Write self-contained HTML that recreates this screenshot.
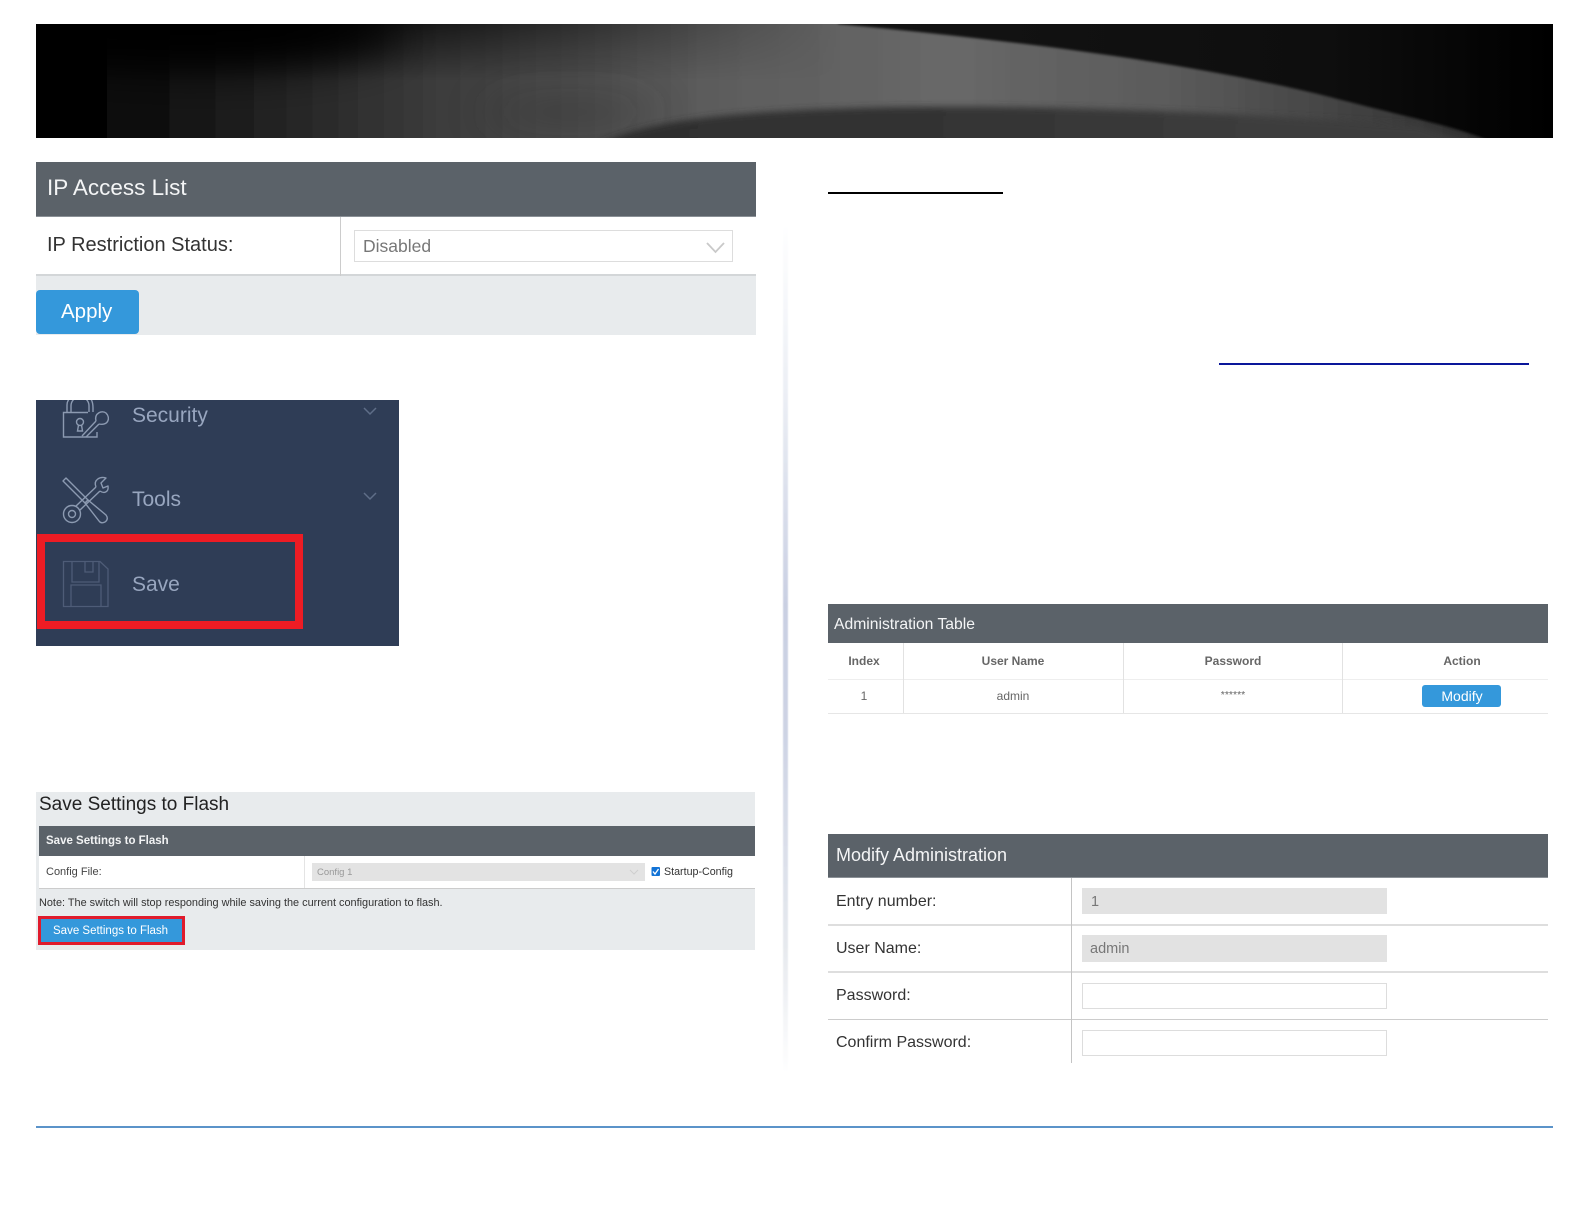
<!DOCTYPE html>
<html><head><meta charset="utf-8"><title>Switch user guide page</title>
<style>
html,body{margin:0;padding:0;background:#fff}
body{width:1584px;height:1224px;position:relative;overflow:hidden;font-family:"Liberation Sans",sans-serif}
.b{position:absolute;box-sizing:border-box}
.t{position:absolute;white-space:nowrap;height:20px;line-height:20px;filter:blur(.25px)}
.c{transform:translateX(-50%)}
svg{position:absolute;left:0;top:0}
</style></head><body>
<svg width="1584" height="1224" viewBox="0 0 1584 1224" style="z-index:0">
<defs>
<clipPath id="bc"><rect x="36" y="24" width="1517" height="114"/></clipPath>
<clipPath id="sc"><rect x="36" y="400" width="363" height="246"/></clipPath>
<linearGradient id="lit" gradientUnits="userSpaceOnUse" x1="70" y1="0" x2="1490" y2="0">
<stop offset="0" stop-color="#000"/><stop offset=".1" stop-color="#191919"/><stop offset=".26" stop-color="#3c3c3c"/><stop offset=".45" stop-color="#5c5c5c"/><stop offset=".62" stop-color="#686868"/><stop offset=".78" stop-color="#5a5a5a"/><stop offset=".92" stop-color="#3e3e3e"/><stop offset="1" stop-color="#2c2c2c"/>
</linearGradient>
<linearGradient id="dk" gradientUnits="userSpaceOnUse" x1="600" y1="0" x2="1420" y2="0">
<stop offset="0" stop-color="#2e2e2e"/><stop offset=".4" stop-color="#333"/><stop offset=".8" stop-color="#3c3c3c"/><stop offset="1" stop-color="#3c3c3c"/>
</linearGradient>
<linearGradient id="rg" gradientUnits="userSpaceOnUse" x1="800" y1="0" x2="1553" y2="0">
<stop offset="0" stop-color="#141414"/><stop offset=".7" stop-color="#0e0e0e"/><stop offset="1" stop-color="#000"/>
</linearGradient>
<linearGradient id="top" gradientUnits="userSpaceOnUse" x1="0" y1="24" x2="0" y2="80">
<stop offset="0" stop-color="#000" stop-opacity=".85"/><stop offset="1" stop-color="#000" stop-opacity="0"/>
</linearGradient>
<linearGradient id="topm" gradientUnits="userSpaceOnUse" x1="250" y1="0" x2="838" y2="0">
<stop offset="0" stop-color="#fff"/><stop offset="1" stop-color="#000"/>
</linearGradient>
<mask id="tm"><rect x="0" y="0" width="1584" height="200" fill="url(#topm)"/></mask>
<linearGradient id="sidebarDiv" gradientUnits="userSpaceOnUse" x1="0" y1="220" x2="0" y2="1075">
<stop offset="0" stop-color="#fff"/><stop offset=".2" stop-color="#eceff5"/><stop offset=".45" stop-color="#c9cfe2"/><stop offset=".6" stop-color="#cdd3e4"/><stop offset=".85" stop-color="#e6e9ee"/><stop offset="1" stop-color="#fff"/>
</linearGradient>
<filter id="b4" filterUnits="userSpaceOnUse" x="400" y="60" width="1200" height="120"><feGaussianBlur stdDeviation="3.500"/></filter>
<filter id="b22" filterUnits="userSpaceOnUse" x="-200" y="-100" width="1000" height="400"><feGaussianBlur stdDeviation="22"/></filter>
<filter id="b1"><feGaussianBlur stdDeviation="0.8"/></filter>
<filter id="b12" filterUnits="userSpaceOnUse" x="0" y="0" width="1584" height="200"><feGaussianBlur stdDeviation="1.300"/></filter>
</defs>
<g clip-path="url(#bc)">
<rect x="36" y="24" width="1517" height="114" fill="#000"/>
<rect x="800" y="24" width="753" height="114" fill="url(#rg)"/>
<path d="M30 145 L30 20 L838 20 L838 24 C1010 40 1190 62 1330 97 C1410 118 1465 128 1498 145 Z" fill="url(#lit)" filter="url(#b12)"/>
<rect x="36" y="20" width="900" height="60" fill="url(#top)" mask="url(#tm)"/>
<ellipse cx="190" cy="30" rx="210" ry="38" fill="#000" filter="url(#b22)"/>
<ellipse cx="570" cy="112" rx="90" ry="12" fill="#2c2c2c" opacity=".45" filter="url(#b22)"/>
<path d="M595 146 C640 122 720 112 860 108 C1010 104 1200 110 1420 126 L1480 146 Z" fill="url(#dk)" filter="url(#b4)"/>
</g>
<rect x="783" y="220" width="5" height="855" fill="url(#sidebarDiv)" filter="url(#b1)"/>
</svg>

<!-- rules -->
<div class="b" style="left:828px;top:192px;width:175px;height:2px;background:#000"></div>
<div class="b" style="left:1219px;top:363px;width:310px;height:2px;background:#0a169a"></div>
<div class="b" style="left:36px;top:1126px;width:1517px;height:2px;background:#5b93c9"></div>

<!-- IP Access List -->
<div class="b" style="left:36px;top:162px;width:720px;height:55px;background:#5b6269;border-bottom:1px solid #8a9096"></div>
<div class="t" style="left:47px;top:178px;font-size:22.500px;color:#f4f5f6">IP Access List</div>
<div class="b" style="left:36px;top:217px;width:720px;height:59px;background:#fff;border-bottom:2px solid #d3d6d8"></div>
<div class="b" style="left:340px;top:217px;width:1px;height:59px;background:#ccc"></div>
<div class="t" style="left:47px;top:235px;font-size:20px;color:#333">IP Restriction Status:</div>
<div class="b" style="left:354px;top:230px;width:379px;height:32px;background:#fff;border:1px solid #ddd"></div>
<div class="t" style="left:363px;top:236px;font-size:17.500px;color:#777">Disabled</div>
<svg width="1584" height="1224" style="z-index:2;pointer-events:none"><path d="M707 243 L715.500 252 L724 243" fill="none" stroke="#c9c9c9" stroke-width="1.800"/></svg>
<div class="b" style="left:36px;top:276px;width:720px;height:59px;background:#e8ebed"></div>
<div class="b" style="left:36px;top:290px;width:103px;height:44px;background:#3498db;border-radius:4px"></div>
<div class="t" style="left:61px;top:302px;font-size:20.500px;color:#fff">Apply</div>

<!-- Sidebar -->
<div class="b" style="left:36px;top:400px;width:363px;height:246px;background:#2f3d56"></div>
<div class="t" style="left:132px;top:406px;font-size:21px;color:#98a6bf">Security</div>
<div class="t" style="left:132px;top:490px;font-size:21px;color:#98a6bf">Tools</div>
<div class="t" style="left:132px;top:575px;font-size:21px;color:#98a6bf">Save</div>
<svg width="1584" height="1224" style="z-index:2;pointer-events:none">
<g fill="none" stroke="#5f6e88" stroke-width="1.500">
<path d="M364 408 L370 414 L376 408"/>
<path d="M364 493 L370 499 L376 493"/>
</g>
<!-- lock -->
<g fill="none" stroke="#8c9ab1" stroke-width="1.400" clip-path="url(#sc)">
<path d="M97 432 V437 H63.500 V412.500 H88"/>
<path d="M67 412 V405 Q67 401 70 398 M71 412 V406 Q71 402 74 399 M89 412 V406 Q89 402 86 399 M93 412 V408 Q93 401 90 398"/>
<circle cx="80" cy="422" r="3.500"/><path d="M78.500 425 L77.500 431 H82.500 L81.500 425"/>
<path d="M82 436 L96 421 M86 437 L99 424"/>
<path d="M96 421 C94 413 102 410 106 413 C111 418 108 426 99 424"/>
</g>
<!-- tools -->
<g fill="none" stroke="#8c9ab1" stroke-width="1.400" stroke-linejoin="round">
<path d="M63 481 L66 478 L88 500 L85 503 Z"/>
<path d="M85 503 L88 500 L106 515 Q109 519 105 522 Q101 524 99 521 Z"/>
<circle cx="72" cy="514" r="8.500"/><circle cx="72" cy="514" r="3.500"/>
<path d="M76 506 L96 487 M80 510 L100 491"/>
<path d="M96 487 C93 480 100 476 106 478 L101 483 L103 488 L108 486 C109 492 104 494 100 491"/>
</g>
<!-- save -->
<g fill="none" stroke="#4e5c77" stroke-width="1.300">
<path d="M63.500 561.500 H100 L108 569 V606.500 H63.500 Z"/>
<path d="M72 561.500 V582 H99 V561.500"/>
<path d="M85 561.500 V572 H93 V561.500"/>
<path d="M71 606.500 V585 H101 V606.500"/>
</g>
</svg>
<div class="b" style="left:37px;top:534px;width:266px;height:95px;border:8px solid #ed1c24;z-index:3"></div>

<!-- Save Settings to Flash -->
<div class="b" style="left:36px;top:792px;width:719px;height:158px;background:#e8ebed"></div>
<div class="t" style="left:39px;top:795px;font-size:19px;color:#222">Save Settings to Flash</div>
<div class="b" style="left:39px;top:826px;width:716px;height:30px;background:#5b6269"></div>
<div class="t" style="left:46px;top:831px;font-size:11.500px;font-weight:bold;color:#f2f3f4">Save Settings to Flash</div>
<div class="b" style="left:39px;top:856px;width:716px;height:33px;background:#fff;border-bottom:1px solid #ccc"></div>
<div class="b" style="left:304px;top:856px;width:1px;height:32px;background:#e4e4e4"></div>
<div class="t" style="left:46px;top:862px;font-size:11px;color:#444">Config File:</div>
<div class="b" style="left:312px;top:863px;width:333px;height:18px;background:#e3e3e3"></div>
<div class="t" style="left:317px;top:863px;font-size:9.500px;color:#999">Config 1</div>
<svg width="1584" height="1224" style="z-index:2;pointer-events:none">
<path d="M630 870 L634 874 L638 870" fill="none" stroke="#cfcfcf" stroke-width="1"/>
<rect x="651.500" y="867" width="8.500" height="9" rx="1" fill="#1273d6"/>
<path d="M653 871.500 L655 874 L658.500 869" fill="none" stroke="#fff" stroke-width="1.300"/>
</svg>
<div class="t" style="left:664px;top:862px;font-size:10.700px;color:#333">Startup-Config</div>
<div class="t" style="left:39px;top:893px;font-size:10.900px;color:#333">Note: The switch will stop responding while saving the current configuration to flash.</div>
<div class="b" style="left:38px;top:916px;width:147px;height:29px;background:#3498db;border:3px solid #e01b2c"></div>
<div class="t" style="left:53px;top:921px;font-size:11.500px;color:#fff">Save Settings to Flash</div>

<!-- Administration Table -->
<div class="b" style="left:828px;top:604px;width:720px;height:39px;background:#5b6269"></div>
<div class="t" style="left:834px;top:615px;font-size:15.700px;color:#f4f5f6">Administration Table</div>
<div class="b" style="left:828px;top:679px;width:720px;height:1px;background:#eee"></div>
<div class="b" style="left:828px;top:713px;width:720px;height:1px;background:#e6e6e6"></div>
<div class="b" style="left:903px;top:643px;width:1px;height:70px;background:#e2e2e2"></div>
<div class="b" style="left:1123px;top:643px;width:1px;height:70px;background:#e2e2e2"></div>
<div class="b" style="left:1342px;top:643px;width:1px;height:70px;background:#e2e2e2"></div>
<div class="t c" style="left:864px;top:651px;font-size:12px;font-weight:bold;color:#666">Index</div>
<div class="t c" style="left:1013px;top:651px;font-size:12px;font-weight:bold;color:#666">User Name</div>
<div class="t c" style="left:1233px;top:651px;font-size:12px;font-weight:bold;color:#666">Password</div>
<div class="t c" style="left:1462px;top:651px;font-size:12px;font-weight:bold;color:#666">Action</div>
<div class="t c" style="left:864px;top:686px;font-size:12px;color:#666">1</div>
<div class="t c" style="left:1013px;top:686px;font-size:12px;color:#666">admin</div>
<div class="t c" style="left:1233px;top:685px;font-size:10.500px;color:#666">******</div>
<div class="b" style="left:1422px;top:685px;width:79px;height:22px;background:#3498db;border-radius:3px"></div>
<div class="t c" style="left:1462px;top:686px;font-size:14px;color:#fff">Modify</div>

<!-- Modify Administration -->
<div class="b" style="left:828px;top:834px;width:720px;height:44px;background:#5b6269;border-bottom:1px solid #8a9096"></div>
<div class="t" style="left:836px;top:845px;font-size:18px;color:#f4f5f6">Modify Administration</div>
<div class="b" style="left:828px;top:924px;width:720px;height:2px;background:#dedede"></div>
<div class="b" style="left:828px;top:971px;width:720px;height:2px;background:#dedede"></div>
<div class="b" style="left:828px;top:1019px;width:720px;height:1px;background:#ccc"></div>
<div class="b" style="left:1071px;top:878px;width:1px;height:185px;background:#c4c4c4"></div>
<div class="t" style="left:836px;top:892px;font-size:16px;color:#333">Entry number:</div>
<div class="t" style="left:836px;top:939px;font-size:16px;color:#333">User Name:</div>
<div class="t" style="left:836px;top:986px;font-size:16px;color:#333">Password:</div>
<div class="t" style="left:836px;top:1033px;font-size:16px;color:#333">Confirm Password:</div>
<div class="b" style="left:1082px;top:888px;width:305px;height:26px;background:#e2e2e2"></div>
<div class="b" style="left:1082px;top:935px;width:305px;height:27px;background:#e2e2e2"></div>
<div class="b" style="left:1082px;top:983px;width:305px;height:26px;background:#fff;border:1px solid #ddd"></div>
<div class="b" style="left:1082px;top:1030px;width:305px;height:26px;background:#fff;border:1px solid #ddd"></div>
<div class="t" style="left:1091px;top:892px;font-size:14.500px;color:#777">1</div>
<div class="t" style="left:1090px;top:939px;font-size:14.500px;color:#777">admin</div>
</body></html>
